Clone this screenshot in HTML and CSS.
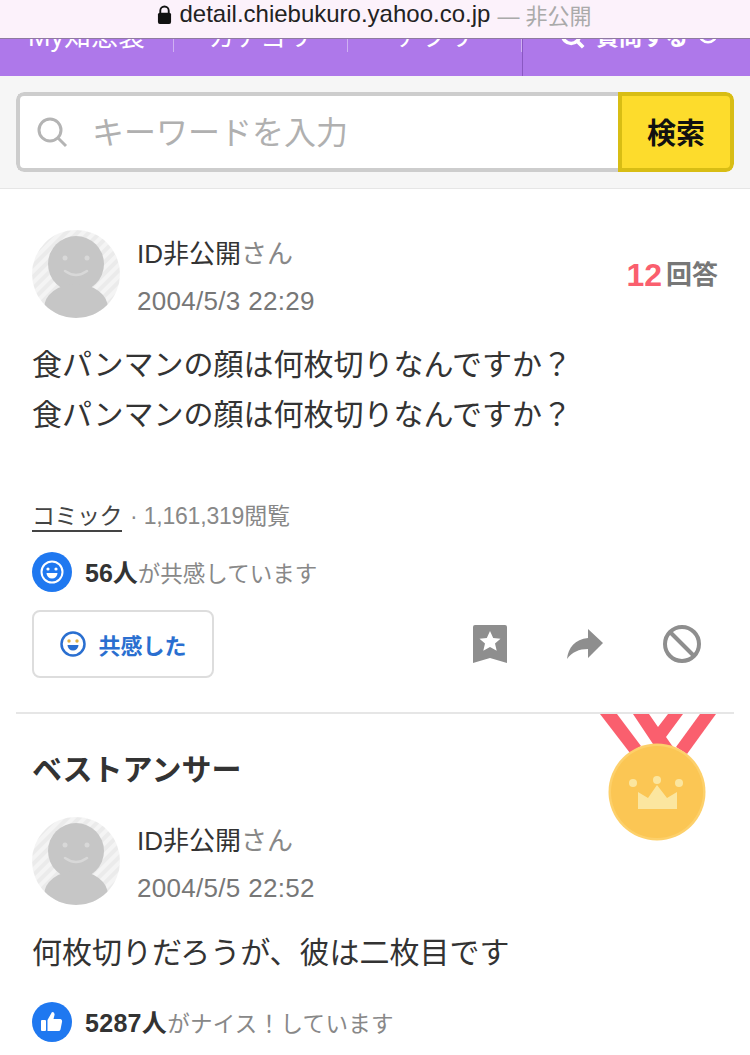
FILE: index.html
```html
<!DOCTYPE html>
<html lang="ja">
<head>
    <meta charset="UTF-8">
    <meta name="viewport" content="width=device-width, initial-scale=1.0">
    <title>食パンマンの顔は何枚切りなんですか？</title>
    <link rel="stylesheet" href="styles.css">
</head>
<body>

    <!-- адресная строка -->
    <div class="address-bar">
        <svg class="lock" viewBox="0 0 16 20" width="15" height="19"><path d="M3.5 9V6a4.500 4.500 0 0 1 9 0v3" fill="none" stroke="#111" stroke-width="2"/><rect x="1" y="8" width="14" height="12" rx="2" fill="#111"/></svg>
        <span class="host">detail.chiebukuro.yahoo.co.jp</span>
        <span class="host-note">— 非公開</span>
    </div>

    <nav class="nav">
        <div class="nav-item nav-my">My知恵袋</div>
        <div class="nav-item nav-cat">カテゴリ</div>
        <div class="nav-item nav-app">アプリ</div>
        <div class="nav-ask">
            <div class="ask-inner">
                <svg viewBox="0 0 28 28" width="26" height="26"><circle cx="12" cy="12" r="9" fill="none" stroke="#fff" stroke-width="4"/><path d="M18 18l7 7" stroke="#fff" stroke-width="4"/></svg>
                <span>質問する</span>
                <svg viewBox="0 0 24 24" width="20" height="20"><circle cx="12" cy="12" r="10" fill="none" stroke="#fff" stroke-width="3"/></svg>
            </div>
        </div>
    </nav>

    <div class="search-area">
        <div class="search-box">
            <div class="search-input">
                <svg viewBox="0 0 32 32" width="32" height="32"><circle cx="14" cy="14" r="11" fill="none" stroke="#b4b4b4" stroke-width="3"/><path d="M22 22l8 8" stroke="#b4b4b4" stroke-width="3"/></svg>
                <span class="placeholder">キーワードを入力</span>
            </div>
            <div class="search-btn">検索</div>
        </div>
    </div>

    <!-- вопрос -->
    <section class="question">
        <div class="post-head">
            <svg class="avatar" viewBox="0 0 88 88" width="88" height="88">
                <defs>
                    <pattern id="stripes" width="8" height="8" patternUnits="userSpaceOnUse" patternTransform="rotate(-45)">
                        <rect width="8" height="8" fill="#f4f4f4"/>
                        <rect width="8" height="4" fill="#ebebeb"/>
                    </pattern>
                    <clipPath id="circleClip"><circle cx="44" cy="44" r="44"/></clipPath>
                </defs>
                <circle cx="44" cy="44" r="44" fill="url(#stripes)"/>
                <g clip-path="url(#circleClip)">
                    <circle cx="44" cy="34" r="28" fill="#c6c6c6"/>
                    <ellipse cx="44" cy="78" rx="32" ry="24" fill="#c6c6c6"/>
                    <circle cx="33" cy="28" r="2.5" fill="#d8d8d8"/>
                    <circle cx="55" cy="28" r="2.5" fill="#d8d8d8"/>
                    <path d="M33 41q11 8 22 0" fill="none" stroke="#d8d8d8" stroke-width="2.5" stroke-linecap="round"/>
                </g>
            </svg>
            <div class="post-meta">
                <div class="name">ID非公開<span class="san">さん</span></div>
                <div class="date">2004/5/3 22:29</div>
            </div>
            <div class="answer-count"><span class="count-num">12</span><span class="count-label">回答</span></div>
        </div>

        <p class="body-text">食パンマンの顔は何枚切りなんですか？<br>食パンマンの顔は何枚切りなんですか？</p>

        <div class="category-row"><span class="category">コミック</span><span class="views">· 1,161,319閲覧</span></div>

        <div class="reaction-row">
            <svg class="reaction-icon" viewBox="0 0 40 40" width="40" height="40">
                <circle cx="20" cy="20" r="20" fill="#1f78f0"/>
                <circle cx="20" cy="20" r="10.500" fill="none" stroke="#fff" stroke-width="2"/>
                <circle cx="16" cy="17" r="1.600" fill="#fff"/>
                <circle cx="24" cy="17" r="1.600" fill="#fff"/>
                <path d="M14.500 21h11a5.500 5.500 0 0 1-11 0z" fill="#fff"/>
            </svg>
            <span class="reaction-text"><b>56人</b>が共感しています</span>
        </div>

        <div class="action-row">
            <div class="empathy-btn">
                <svg viewBox="0 0 28 28" width="28" height="28">
                    <circle cx="14" cy="14" r="11.500" fill="none" stroke="#2a6fd0" stroke-width="2.500"/>
                    <circle cx="10" cy="11" r="1.700" fill="#e0b040"/>
                    <circle cx="18" cy="11" r="1.700" fill="#e0b040"/>
                    <path d="M8.500 15h11a5.500 5.500 0 0 1-11 0z" fill="#2a6fd0"/>
                </svg>
                <span>共感した</span>
            </div>
            <div class="action-icons">
                <svg viewBox="0 0 34 38" width="34" height="38"><path d="M0 2q0-2 2-2h30q2 0 2 2v36l-17-5-17 5z" fill="#8e8e8e"/><path d="M17 6l3.200 7 7.300.7-5.500 4.800 1.700 7.300-6.700-3.800-6.700 3.800 1.700-7.300-5.500-4.800 7.300-.7z" fill="#fff"/></svg>
                <svg viewBox="0 0 36 30" width="36" height="30"><path d="M21 0l15 14-15 15v-9C12 20 5 23 0 30c1-11 8-20 21-21z" fill="#8e8e8e"/></svg>
                <svg viewBox="0 0 38 38" width="38" height="38"><circle cx="19" cy="19" r="17" fill="none" stroke="#8e8e8e" stroke-width="4"/><path d="M7 7l24 24" stroke="#8e8e8e" stroke-width="4"/></svg>
            </div>
        </div>
    </section>

    <!-- лучший ответ -->
    <section class="best-answer">
        <svg class="medal" viewBox="0 0 116 128" width="116" height="128">
            <path d="M0 0h17l24 32-11 7z" fill="#fa5f6e"/>
            <path d="M100 0h16L87 40l-11-7z" fill="#fa5f6e"/>
            <path d="M33 0h16l9 13 10-13h15L66 23l7 10H55z" fill="#fa5f6e"/>
            <circle cx="57" cy="78" r="48.500" fill="#fdd06a"/>
            <circle cx="57" cy="78" r="46" fill="#fbc654"/>
            <path d="M38 95V78l10 6 9-13 10 13 10-6v17z" fill="#fbe69f"/>
            <circle cx="33" cy="69" r="4" fill="#fbe69f"/>
            <circle cx="57" cy="66" r="4" fill="#fbe69f"/>
            <circle cx="79" cy="69" r="4" fill="#fbe69f"/>
        </svg>
        <h2 class="best-title">ベストアンサー</h2>
        <div class="post-head">
            <svg class="avatar" viewBox="0 0 88 88" width="88" height="88">
                <circle cx="44" cy="44" r="44" fill="url(#stripes)"/>
                <g clip-path="url(#circleClip)">
                    <circle cx="44" cy="34" r="28" fill="#c6c6c6"/>
                    <ellipse cx="44" cy="78" rx="32" ry="24" fill="#c6c6c6"/>
                    <circle cx="33" cy="28" r="2.5" fill="#d8d8d8"/>
                    <circle cx="55" cy="28" r="2.5" fill="#d8d8d8"/>
                    <path d="M33 41q11 8 22 0" fill="none" stroke="#d8d8d8" stroke-width="2.5" stroke-linecap="round"/>
                </g>
            </svg>
            <div class="post-meta">
                <div class="name">ID非公開<span class="san">さん</span></div>
                <div class="date">2004/5/5 22:52</div>
            </div>
        </div>
        <p class="body-text answer-text">何枚切りだろうが、彼は二枚目です</p>
        <div class="reaction-row">
            <svg class="reaction-icon" viewBox="0 0 40 40" width="40" height="40">
                <circle cx="20" cy="20" r="20" fill="#1f78f0"/>
                <rect x="9" y="18" width="5" height="11" rx="1" fill="#fff"/>
                <path d="M15.500 18l4.500-8q3 0 2.500 3l-1 4h7q2 .5 1.500 3l-1.500 7.500q-.5 1.500-2 1.500h-11z" fill="#fff"/>
            </svg>
            <span class="reaction-text"><b>5287人</b>がナイス！しています</span>
        </div>
    </section>

</body>
</html>
```

FILE: styles.css
```css
body {
    font-family: "Liberation Sans", "Noto Sans CJK JP", sans-serif;
    margin: 0;
    padding: 0;
    width: 750px;
    height: 1055px;
    overflow: hidden;
    background: #fff;
    color: #333;
}

.address-bar {
    height: 39px;
    background: #fcf2fb;
    border-bottom: 1px solid #8f7aa0;
    box-sizing: border-box;
    display: flex;
    align-items: center;
    justify-content: center;
    gap: 8px;
    font-size: 24px;
    padding: 0 2px 10px 0;
}
.host {
    color: #222;
}
.host-note {
    color: #aaa;
    font-size: 22px;
    margin-left: -1px;
}

.nav {
    height: 37px;
    background: #ae78ea;
    display: flex;
    color: #fff;
    font-size: 27px;
    overflow: hidden;
}
.nav-item {
    margin-top: -17px;
    height: 30px;
    line-height: 30px;
    text-align: center;
    box-sizing: border-box;
    border-right: 1px solid #cfb0f2;
    white-space: nowrap;
}
.nav-my {
    width: 174px;
}
.nav-cat {
    width: 174px;
    font-size: 26px;
}
.nav-app {
    width: 174px;
    font-size: 26px;
}
.nav-ask {
    flex: 1;
    border-left: 1px solid #8a58c2;
}
.ask-inner {
    margin-top: -17px;
    display: flex;
    align-items: flex-start;
    gap: 10px;
    padding-left: 37px;
    font-weight: bold;
    font-size: 23px;
    line-height: 30px;
    white-space: nowrap;
}
.ask-inner svg {
    margin-top: 2px;
}

.search-area {
    height: 113px;
    background: #f6f6f6;
    border-bottom: 1px solid #e6e6e6;
    box-sizing: border-box;
    padding: 16px;
}
.search-box {
    height: 80px;
    display: flex;
    border-radius: 8px;
    overflow: hidden;
    background: #fff;
}
.search-input {
    flex: 1;
    border: 4px solid #cdcdcd;
    border-right: none;
    border-radius: 8px 0 0 8px;
    display: flex;
    align-items: center;
    gap: 24px;
    padding-left: 16px;
}
.placeholder {
    font-size: 32px;
    color: #b0b0b0;
    padding-bottom: 4px;
}
.search-btn {
    width: 116px;
    box-sizing: border-box;
    background: #fddc2c;
    border: 4px solid #d8bd14;
    border-radius: 0 8px 8px 0;
    color: #111;
    font-size: 29px;
    font-weight: bold;
    display: flex;
    align-items: center;
    justify-content: center;
    padding-bottom: 2px;
}

.question {
    padding: 41px 32px 0;
    height: 523px;
    box-sizing: border-box;
}
.post-head {
    display: flex;
    align-items: flex-start;
}
.avatar {
    flex: none;
}
.post-meta {
    margin-left: 17px;
}
.name {
    font-size: 26px;
    line-height: 48px;
    color: #333;
}
.san {
    color: #888;
}
.date {
    font-size: 26px;
    line-height: 46px;
    color: #777;
    letter-spacing: 0.3px;
}
.answer-count {
    margin-left: auto;
    margin-top: 24px;
    display: flex;
    align-items: center;
    gap: 4px;
}
.count-num {
    color: #fa5f6e;
    font-size: 32px;
    font-weight: bold;
    line-height: 42px;
}
.count-label {
    color: #777;
    font-size: 26px;
    font-weight: bold;
    line-height: 42px;
}

.body-text {
    margin: 16px 0 0;
    font-size: 30px;
    line-height: 50px;
    color: #333;
}

.category-row {
    margin-top: 58px;
    font-size: 23px;
    line-height: 36px;
    color: #888;
}
.category {
    color: #444;
    border-bottom: 2px solid #444;
    letter-spacing: -0.5px;
    padding-bottom: 1px;
}
.views {
    margin-left: 8px;
    letter-spacing: -0.2px;
}

.reaction-row {
    display: flex;
    align-items: center;
    gap: 13px;
}
.question .reaction-row {
    margin-top: 18px;
}
.reaction-text {
    font-size: 22.5px;
    color: #888;
    white-space: nowrap;
    padding-bottom: 2px;
}
.reaction-text b {
    color: #333;
    font-size: 25px;
}
.best-answer .reaction-text {
    letter-spacing: 0.3px;
}

.action-row {
    margin-top: 18px;
    display: flex;
    align-items: center;
}
.empathy-btn {
    width: 182px;
    height: 68px;
    box-sizing: border-box;
    border: 2px solid #ddd;
    border-radius: 8px;
    display: flex;
    align-items: center;
    justify-content: center;
    gap: 11px;
    color: #2a6fd0;
    font-size: 22px;
    font-weight: bold;
}
.action-icons {
    margin-left: auto;
    margin-right: 17px;
    display: flex;
    align-items: center;
    gap: 60px;
}

.best-answer {
    position: relative;
    margin: 0 16px;
    padding: 0 16px;
    height: 343px;
    box-sizing: border-box;
    border-top: 2px solid #e6e6e6;
}
.medal {
    position: absolute;
    top: 0;
    right: 18px;
}
.best-title {
    margin: 0 0 25px;
    padding-top: 34px;
    font-size: 30px;
    line-height: 44px;
    color: #333;
    font-weight: bold;
}
.answer-text {
    margin-top: 17px;
}
.best-answer .reaction-row {
    margin-top: 24px;
}
```
